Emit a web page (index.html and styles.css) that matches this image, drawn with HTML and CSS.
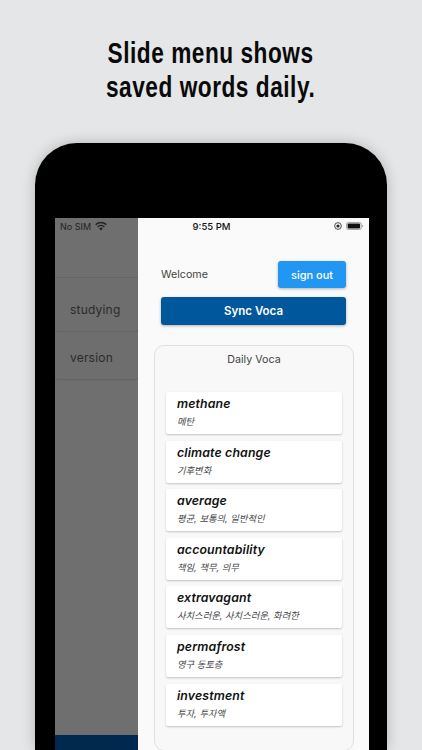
FILE: index.html
```html
<!DOCTYPE html>
<html lang="en">
<head>
<meta charset="utf-8">
<title>Slide menu</title>
<link rel="stylesheet" href="styles.css">
</head>
<body>
<h1 class="headline">Slide menu shows<br>saved words daily.</h1>
<div class="device">
  <div class="screen">
    <div class="backdrop">
      <div class="status-left">
        <span>No SIM</span>
        <svg class="wifi" viewBox="0 0 14 10" width="12" height="9"><path d="M7 9.6 4.9 7.3a3 3 0 0 1 4.2 0zM3.7 6.1 2.5 4.8a6.4 6.4 0 0 1 9 0l-1.2 1.3a4.7 4.7 0 0 0-6.6 0zM1.4 3.6.2 2.3a9.700 9.700 0 0 1 13.6 0l-1.2 1.3a8 8 0 0 0-11.2 0z" fill="#222"/></svg>
      </div>
      <div class="menu">
        <div class="menu-item menu-item-first">studying</div>
        <div class="menu-item">version</div>
      </div>
      <div class="tabbar"></div>
    </div>
    <aside class="drawer">
      <div class="status-bar">
        <span class="clock">9:55 PM</span>
        <span class="status-right">
          <svg viewBox="0 0 10 10" width="8" height="8"><circle cx="5" cy="5" r="4.2" fill="none" stroke="#222" stroke-width="1"/><circle cx="5" cy="5" r="2" fill="#222"/></svg>
          <svg viewBox="0 0 20 9" width="18" height="8"><rect x=".5" y=".5" width="16.5" height="8" rx="2" fill="none" stroke="#999"/><rect x="1.700" y="1.700" width="14" height="5.600" rx="1" fill="#111"/><path d="M18 3v3c.8-.2 1.200-.8 1.200-1.500S18.800 3.200 18 3z" fill="#999"/></svg>
        </span>
      </div>
      <div class="account">
        <span class="welcome">Welcome</span>
        <button class="btn btn-signout">sign out</button>
      </div>
      <button class="btn btn-sync">Sync Voca</button>
      <section class="panel">
        <h2 class="panel-title">Daily Voca</h2>
        <ul class="words">
          <li class="word"><b>methane</b><span>메탄</span></li>
          <li class="word"><b>climate change</b><span>기후변화</span></li>
          <li class="word"><b>average</b><span>평균, 보통의, 일반적인</span></li>
          <li class="word"><b>accountability</b><span>책임, 책무, 의무</span></li>
          <li class="word"><b>extravagant</b><span>사치스러운, 사치스러운, 화려한</span></li>
          <li class="word"><b>permafrost</b><span>영구 동토층</span></li>
          <li class="word"><b>investment</b><span>투자, 투자액</span></li>
        </ul>
      </section>
    </aside>
  </div>
</div>
</body>
</html>
```
FILE: styles.css
```css
* { box-sizing: border-box; }
html, body { height: 100%; }
body {
  margin: 0;
  height: 750px;
  overflow: hidden;
  background: #e5e6e8;
  display: flex;
  flex-direction: column;
  align-items: center;
  font-family: Inter, "Noto Sans CJK KR", sans-serif;
}
.headline {
  flex: none;
  margin: 36px 0 0;
  height: 107px;
  font-family: "Liberation Sans", sans-serif;
  font-weight: 700;
  font-size: 30px;
  line-height: 34px;
  letter-spacing: .7px;
  text-align: center;
  white-space: nowrap;
  color: #0a0a0a;
  transform: scaleX(.755);
}
.device {
  width: 352px;
  height: 607px;
  flex: none;
  padding: 75px 18px 0 20px;
  background: #000;
  border-radius: 42px 42px 0 0;
  box-shadow: 0 0 14px rgba(0,0,0,.22);
}
.screen {
  position: relative;
  height: 100%;
  overflow: hidden;
  background: #6f6f6f;
}
.backdrop { height: 100%; display: flex; flex-direction: column; }
.status-left {
  height: 16px;
  padding-left: 5px;
  display: flex;
  align-items: center;
  gap: 4px;
  font-size: 9px;
  color: #222;
}
.menu { margin-top: 43px; }
.menu-item {
  width: 83px;
  height: 48px;
  padding: 4px 0 0 15px;
  display: flex;
  align-items: center;
  font-size: 12px;
  letter-spacing: .2px;
  color: #2b2b2b;
  background: #6e6e6e;
  border-top: 1px solid #666;
  border-radius: 0 0 3px 3px;
  box-shadow: 0 1px 1px rgba(0,0,0,.12);
}
.menu-item-first { height: 54px; padding-top: 9px; }
.tabbar { margin-top: auto; height: 15px; background: #01294f; }
.drawer {
  position: absolute;
  top: 0;
  bottom: 0;
  left: 83px;
  right: 0;
  padding: 0 23px;
  background: #fafafa;
}
.status-bar {
  position: relative;
  height: 16px;
  margin: 0 -23px;
  display: flex;
  justify-content: center;
  align-items: center;
  font-size: 9.5px;
  font-weight: 500;
  color: #111;
}
.clock { margin-right: 84px; }
.status-right {
  position: absolute;
  right: 5px;
  top: 4px;
  display: flex;
  align-items: center;
  gap: 4px;
}
.account {
  margin-top: 27px;
  display: flex;
  justify-content: space-between;
  align-items: center;
}
.welcome { font-size: 10.7px; color: #444; }
.btn {
  border: 0;
  border-radius: 3px;
  font-family: inherit;
  color: #fff;
  box-shadow: 0 1px 3px rgba(0,0,0,.3);
}
.btn-signout {
  width: 68px;
  height: 27px;
  padding: 0;
  background: #2196f3;
  font-size: 11px;
  font-weight: 500;
}
.btn-sync {
  display: block;
  width: 100%;
  height: 28px;
  margin-top: 9px;
  background: #01579b;
  font-size: 11.500px;
  font-weight: 600;
}
.panel {
  margin: 20px -8px 0 -7px;
  height: 406px;
  padding: 7px 11px 0;
  background: #f8f8f8;
  border: 1px solid #e0e0e0;
  border-radius: 10px;
}
.panel-title {
  margin: 0 0 25px;
  height: 14px;
  font-size: 10.700px;
  line-height: 14px;
  font-weight: 400;
  text-align: center;
  color: #444;
}
.words {
  list-style: none;
  margin: 0;
  padding: 0;
  display: flex;
  flex-direction: column;
  gap: 6.600px;
}
.word {
  height: 42px;
  padding: 4px 11px 0;
  background: #fff;
  border-radius: 2px;
  box-shadow: 0 1px 2px rgba(0,0,0,.22);
  font-style: italic;
}
.word b {
  display: block;
  font-size: 12.300px;
  line-height: 15px;
  font-weight: 600;
  letter-spacing: .15px;
  color: #111;
}
.word span {
  display: block;
  margin-top: 4px;
  font-size: 9.300px;
  line-height: 13px;
  color: #444;
}
```
